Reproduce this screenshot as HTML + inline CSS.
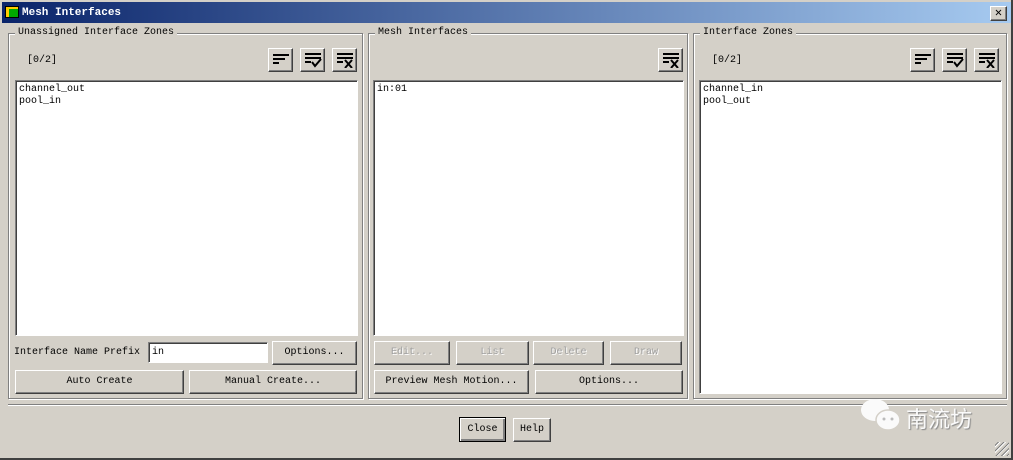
<!DOCTYPE html>
<html><head><style>
*{box-sizing:border-box;margin:0;padding:0}
body{width:1013px;height:460px;background:#d4d0c8;font-family:"Liberation Mono",monospace;font-size:10px;color:#000;position:relative;overflow:hidden}
.a{position:absolute}
.title{left:0;top:0;width:1013px;height:23px;background:linear-gradient(90deg,#0a246a,#a6caf0);border:2px solid #d4d0c8;border-bottom:none}
.title span{position:absolute;left:20px;top:5px;color:#fff;font-weight:bold;font-size:11px}
.grp{border:1px solid #808080;box-shadow:1px 1px 0 #fff, inset 1px 1px 0 #fff}
.lbl{background:#d4d0c8;padding:0 3px;top:-7px;left:6px;position:absolute;white-space:nowrap}
.list{background:#fff;border-top:1px solid #808080;border-left:1px solid #808080;border-right:1px solid #fff;border-bottom:1px solid #fff;box-shadow:inset 1px 1px 0 #404040;padding:3px 3px;line-height:12px}
.btn{border:1px solid;border-color:#fff #404040 #404040 #fff;box-shadow:inset -1px -1px 0 #808080;text-align:center;line-height:22px;white-space:nowrap}
.dis{color:#a0a0a0;text-shadow:1px 1px 0 #fff}
.ib{width:25px;height:24px}
.ib svg{position:absolute;left:3px;top:3px}
</style></head><body>
<div class="a title"><span>Mesh Interfaces</span>
<div class="a" style="left:3px;top:4px;width:14px;height:12px;background:#0a0;border:1px solid #000;box-shadow:inset 3px 2px 0 #fc0"></div>
<div class="a btn" style="left:988px;top:4px;width:17px;height:15px;line-height:13px;font-size:12px;font-weight:bold;background:#d4d0c8;color:#000">✕</div>
</div>

<div class="a grp" style="left:8px;top:33px;width:355px;height:366px"><div class="lbl">Unassigned Interface Zones</div></div>
<div class="a grp" style="left:368px;top:33px;width:320px;height:366px"><div class="lbl">Mesh Interfaces</div></div>
<div class="a grp" style="left:693px;top:33px;width:314px;height:366px"><div class="lbl">Interface Zones</div></div>

<div class="a" style="left:27px;top:55px">[0/2]</div>
<div class="a" style="left:712px;top:55px">[0/2]</div>

<div class="a list" style="left:15px;top:80px;width:343px;height:256px">channel_out<br>pool_in</div>
<div class="a list" style="left:373px;top:80px;width:311px;height:256px">in:01</div>
<div class="a list" style="left:699px;top:80px;width:303px;height:314px">channel_in<br>pool_out</div>

<div class="a btn ib" style="left:268px;top:48px"><svg width="18" height="16"><path d="M1 3h16M1 7h12M1 11h6" stroke="#000" stroke-width="2"/></svg></div>
<div class="a btn ib" style="left:300px;top:48px"><svg width="18" height="16"><path d="M1 2h16M1 6h16M1 10h6M8 10l3 4l6-7" stroke="#000" stroke-width="2" fill="none"/></svg></div>
<div class="a btn ib" style="left:332px;top:48px"><svg width="18" height="16"><path d="M1 2h16M1 6h16M1 10h6M9 8l7 8M16 8l-7 8" stroke="#000" stroke-width="2" fill="none"/></svg></div>
<div class="a btn ib" style="left:658px;top:48px"><svg width="18" height="16"><path d="M1 2h16M1 6h16M1 10h6M9 8l7 8M16 8l-7 8" stroke="#000" stroke-width="2" fill="none"/></svg></div>
<div class="a btn ib" style="left:910px;top:48px"><svg width="18" height="16"><path d="M1 3h16M1 7h12M1 11h6" stroke="#000" stroke-width="2"/></svg></div>
<div class="a btn ib" style="left:942px;top:48px"><svg width="18" height="16"><path d="M1 2h16M1 6h16M1 10h6M8 10l3 4l6-7" stroke="#000" stroke-width="2" fill="none"/></svg></div>
<div class="a btn ib" style="left:974px;top:48px"><svg width="18" height="16"><path d="M1 2h16M1 6h16M1 10h6M9 8l7 8M16 8l-7 8" stroke="#000" stroke-width="2" fill="none"/></svg></div>

<div class="a" style="left:14px;top:347px">Interface Name Prefix</div>
<div class="a list" style="left:148px;top:342px;width:120px;height:21px;padding-top:4px">in</div>
<div class="a btn" style="left:272px;top:341px;width:85px;height:24px">Options...</div>
<div class="a btn" style="left:15px;top:370px;width:169px;height:24px">Auto Create</div>
<div class="a btn" style="left:189px;top:370px;width:168px;height:24px">Manual Create...</div>

<div class="a btn dis" style="left:374px;top:341px;width:76px;height:24px">Edit...</div>
<div class="a btn dis" style="left:456px;top:341px;width:73px;height:24px">List</div>
<div class="a btn dis" style="left:533px;top:341px;width:71px;height:24px">Delete</div>
<div class="a btn dis" style="left:610px;top:341px;width:72px;height:24px">Draw</div>
<div class="a btn" style="left:374px;top:370px;width:155px;height:24px">Preview Mesh Motion...</div>
<div class="a btn" style="left:535px;top:370px;width:148px;height:24px">Options...</div>

<div class="a" style="left:8px;top:404px;width:999px;height:2px;border-top:1px solid #808080;border-bottom:1px solid #fff"></div>

<div class="a btn" style="left:459px;top:417px;width:47px;height:25px;border:1px solid #000;box-shadow:inset 1px 1px 0 #fff,inset -2px -2px 0 #808080;line-height:24px">Close</div>
<div class="a btn" style="left:513px;top:418px;width:38px;height:24px">Help</div>

<div class="a" style="left:858px;top:398px;width:60px;height:36px">
<svg width="60" height="36"><ellipse cx="17" cy="12" rx="14" ry="11" fill="#fafafa"/><ellipse cx="30" cy="22" rx="12" ry="10" fill="#fafafa" stroke="#d4d0c8" stroke-width="1.5"/><circle cx="26" cy="21" r="1.5" fill="#bbb"/><circle cx="34" cy="21" r="1.5" fill="#bbb"/></svg></div>
<div class="a" style="left:906px;top:402px;font-family:'Noto Sans CJK SC',sans-serif;font-size:22px;color:#fafafa;text-shadow:1px 1px 1px #888">南流坊</div>
<div class="a" style="left:995px;top:442px;width:14px;height:14px;background:repeating-linear-gradient(135deg,transparent 0 2px,#808080 2px 3px,#fff 3px 4px)"></div>
<div class="a" style="left:0;top:458px;width:1013px;height:2px;background:#404040"></div>
<div class="a" style="left:1011px;top:0;width:2px;height:460px;background:#404040"></div>
</body></html>
